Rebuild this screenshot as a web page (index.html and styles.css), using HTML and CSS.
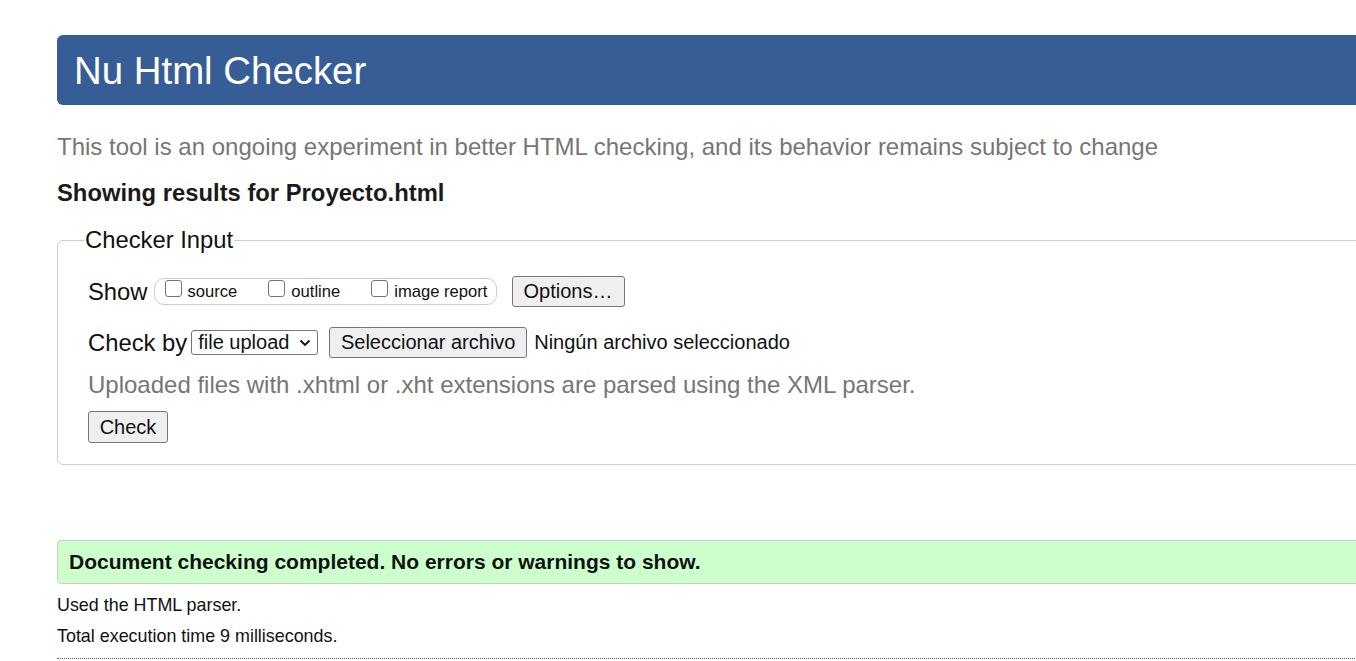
FILE: index.html
```html
<!DOCTYPE html>
<html lang="en">
<head>
<meta charset="utf-8">
<title>Nu Html Checker</title>
<link rel="stylesheet" href="styles.css">
</head>
<body>
<div class="page">
  <h1 class="banner">Nu Html Checker</h1>
  <p class="intro">This tool is an ongoing experiment in better HTML checking, and its behavior remains subject to change</p>
  <h2 class="results-title">Showing results for Proyecto.html</h2>
  <fieldset class="input-box">
    <legend class="legend">Checker Input</legend>
    <div class="row show-row">
      <span class="row-label">Show</span>
      <span class="opt-group">
        <label class="opt"><input type="checkbox" class="cb">source</label>
        <label class="opt"><input type="checkbox" class="cb">outline</label>
        <label class="opt"><input type="checkbox" class="cb">image report</label>
      </span>
      <button class="btn btn-options" type="button">Options…</button>
    </div>
    <div class="row check-row">
      <span class="row-label">Check by</span>
      <span class="select">file upload
        <svg class="chev" width="12" height="8" viewBox="0 0 12 8"><path d="M1.5 1.5 L6 6 L10.5 1.5" fill="none" stroke="#111" stroke-width="1.9"/></svg>
      </span>
      <button class="btn btn-file" type="button">Seleccionar archivo</button>
      <span class="file-name">Ningún archivo seleccionado</span>
    </div>
    <p class="hint">Uploaded files with .xhtml or .xht extensions are parsed using the XML parser.</p>
    <button class="btn btn-check" type="button">Check</button>
  </fieldset>
  <div class="success">Document checking completed. No errors or warnings to show.</div>
  <p class="detail">Used the HTML parser.</p>
  <p class="detail">Total execution time 9 milliseconds.</p>
  <div class="dotted"></div>
</div>
</body>
</html>
```
FILE: styles.css
```css
html, body {
  margin: 0;
  padding: 0;
  overflow: hidden;
  background: #fff;
}
body {
  font-family: "Liberation Sans", Arial, sans-serif;
  color: #111;
}
.page {
  margin: 35px 0 0 57px;
  width: 1420px;
}
.banner {
  margin: 0;
  height: 70px;
  box-sizing: border-box;
  padding: 0 0 0 17px;
  background: #365d95;
  color: #fff;
  font-weight: normal;
  font-size: 38.4px;
  line-height: 72px;
  border-radius: 6px 0 0 6px;
}
.intro {
  margin: 27px 0 0 0;
  font-size: 24px;
  line-height: 30px;
  color: #767676;
}
.results-title {
  margin: 16px 0 0 0;
  font-size: 23.8px;
  line-height: 30px;
  font-weight: bold;
  color: #1a1a1a;
}
.input-box {
  margin: 20px 0 0 0;
  padding: 24px 30px 21px 30px;
  border: 1px solid #cccccc;
  border-radius: 6px 0 0 6px;
  min-width: 0;
}
.legend {
  font-size: 23.8px;
  padding: 0 1px;
  margin-left: -4px;
  color: #111;
  line-height: 24px;
}
.row {
  display: flex;
  align-items: center;
}
.row-label {
  font-size: 23.8px;
  color: #111;
}
.show-row {
  height: 31px;
}
.opt-group {
  display: flex;
  align-items: center;
  margin-left: 6px;
  height: 27px;
  box-sizing: border-box;
  border: 1px solid #cccccc;
  border-radius: 10px;
  padding: 0 8px 0 10px;
  width: 343px;
}
.opt {
  display: flex;
  align-items: center;
  font-size: 16.6px;
  color: #111;
  margin-right: 31px;
}
.opt:last-child {
  margin-right: 0;
}
.cb {
  appearance: none;
  -webkit-appearance: none;
  width: 17px;
  height: 17px;
  margin: -6px 6px 0 0;
  border: 1px solid #767676;
  border-radius: 3px;
  background: #fff;
  box-sizing: border-box;
}
.btn {
  font-family: "Liberation Sans", Arial, sans-serif;
  background: #efefef;
  border: 1px solid #767676;
  border-radius: 3px;
  color: #111;
  padding: 0;
  box-sizing: border-box;
}
.btn-options {
  margin-left: 15px;
  width: 113px;
  height: 31px;
  font-size: 20px;
}
.check-row {
  margin-top: 20px;
  height: 31px;
}
.select {
  display: flex;
  align-items: center;
  justify-content: space-between;
  margin-left: 4px;
  width: 127px;
  height: 25px;
  box-sizing: border-box;
  border: 1px solid #767676;
  border-radius: 3px;
  padding: 0 6px 0 6px;
  font-size: 20px;
  background: #fff;
}
.chev {
  display: block;
}
.btn-file {
  margin-left: 11px;
  width: 198px;
  height: 31px;
  font-size: 20px;
}
.file-name {
  margin-left: 7px;
  font-size: 20px;
  color: #111;
}
.hint {
  margin: 14px 0 0 0;
  font-size: 24px;
  line-height: 26px;
  color: #767676;
}
.btn-check {
  display: block;
  margin-top: 13px;
  width: 80px;
  height: 32px;
  font-size: 20px;
}
.success {
  margin-top: 75px;
  height: 44px;
  box-sizing: border-box;
  background: #ccffcc;
  border: 1px solid #cccccc;
  border-radius: 4px 0 0 4px;
  padding: 0 0 0 11px;
  font-size: 21px;
  line-height: 42px;
  font-weight: bold;
  color: #111;
}
.detail {
  margin: 10px 0 0 0;
  font-size: 17.9px;
  line-height: 22px;
  color: #111;
}
.detail + .detail {
  margin-top: 9px;
}
.dotted {
  margin-top: 11px;
  border-top: 1px dotted #555;
}
```
